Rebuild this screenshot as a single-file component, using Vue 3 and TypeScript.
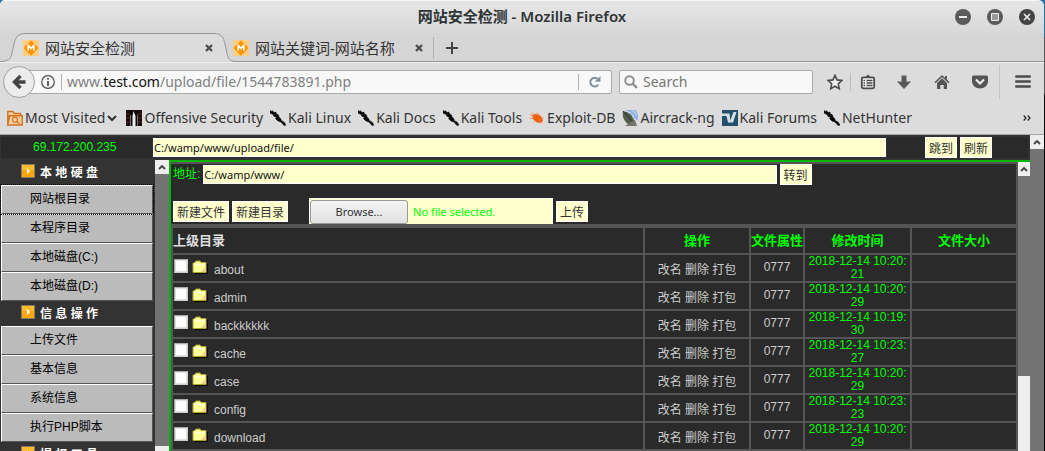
<script setup lang="ts">
import { ref } from 'vue'

interface Bookmark { name: string; icon: string }
interface Folder { name: string; date: string; sec: string }

const tabs = ['网站安全检测', '网站关键词-网站名称']
const bookmarks: Bookmark[] = [
  { name: 'Most Visited', icon: 'visited' },
  { name: 'Offensive Security', icon: 'offsec' },
  { name: 'Kali Linux', icon: 'kali' },
  { name: 'Kali Docs', icon: 'kali' },
  { name: 'Kali Tools', icon: 'kali' },
  { name: 'Exploit-DB', icon: 'bug' },
  { name: 'Aircrack-ng', icon: 'dish' },
  { name: 'Kali Forums', icon: 'forum' },
  { name: 'NetHunter', icon: 'kali' },
]
const groups = [
  { title: '本 地 硬 盘', items: ['网站根目录', '本程序目录', '本地磁盘(C:)', '本地磁盘(D:)'] },
  { title: '信 息 操 作', items: ['上传文件', '基本信息', '系统信息', '执行PHP脚本'] },
  { title: '提 权 工 具', items: [] as string[] },
]
const folders: Folder[] = [
  { name: 'about', date: '2018-12-14 10:20:', sec: '21' },
  { name: 'admin', date: '2018-12-14 10:20:', sec: '29' },
  { name: 'backkkkkk', date: '2018-12-14 10:19:', sec: '30' },
  { name: 'cache', date: '2018-12-14 10:23:', sec: '27' },
  { name: 'case', date: '2018-12-14 10:20:', sec: '29' },
  { name: 'config', date: '2018-12-14 10:23:', sec: '23' },
  { name: 'download', date: '2018-12-14 10:20:', sec: '29' },
]
const search = ref('')
const path = ref('C:/wamp/www/upload/file/')
const address = ref('C:/wamp/www/')
</script>

<template>
  <div class="desktop">
    <div class="window">
      <header class="titlebar">
        <h1>网站安全检测 - Mozilla Firefox</h1>
        <div class="winbtns">
          <button aria-label="Minimize"><svg viewBox="0 0 16 16"><circle cx="8" cy="8" r="8" fill="#5b5b5b" /><path d="M4 8h8" stroke="#ececec" stroke-width="2" /></svg></button>
          <button aria-label="Maximize"><svg viewBox="0 0 16 16"><circle cx="8" cy="8" r="8" fill="#5b5b5b" /><path d="M4.500 4.500h7v7h-7z" fill="#999" stroke="#ececec" /></svg></button>
          <button aria-label="Close"><svg viewBox="0 0 16 16"><circle cx="8" cy="8" r="8" fill="#444" /><path d="M5 5l6 6M11 5l-6 6" stroke="#ececec" stroke-width="1.700" /></svg></button>
        </div>
      </header>

      <div class="tabstrip">
        <div v-for="(t, i) in tabs" :key="t" class="tab" :class="{ active: i === 0 }">
          <svg v-if="i === 0" class="tabshape" viewBox="0 0 236 29">
            <path d="M0 28.500C8 28.500 11 26 12 20L14 11C15.500 4 18 .5 26 .5H214C221 .5 223.500 4 225 11L227 20C228 26 230 28.500 236 28.500V29H0Z" fill="#dcdcdc" />
            <path d="M0 28.500C8 28.500 11 26 12 20L14 11C15.500 4 18 .5 26 .5H214C221 .5 223.500 4 225 11L227 20C228 26 230 28.500 236 28.500" fill="none" stroke="#9098a0" />
          </svg>
          <svg class="fav" viewBox="0 0 16 16"><path d="M0 0h16v16H0z" fill="#ffcf86" /><path d="M8 .3L15.700 8 8 15.700.3 8Z" fill="#ff9800" /><path d="M5.200 10.500v-5L8 8.300l2.800-2.800v5" fill="none" stroke="#fff" stroke-width="1.600" /></svg>
          <span class="tabname">{{ t }}</span>
          <button class="tabclose" aria-label="Close tab"><svg viewBox="0 0 8 8"><path d="M1 1l6 6M7 1L1 7" stroke="#4c4c50" stroke-width="2.300" /></svg></button>
        </div>
        <button class="newtab" aria-label="New tab"><svg viewBox="0 0 12 12"><path d="M6 0v12M0 6h12" stroke="#444" stroke-width="2" /></svg></button>
      </div>

      <nav class="navbar">
        <button class="back" aria-label="Back"><svg viewBox="0 0 16 16"><path d="M9.500 2L3.500 8l6 6M4 8H14.500" fill="none" stroke="#444" stroke-width="3.400" /></svg></button>
        <div class="urlbar">
          <svg class="info" viewBox="0 0 14 14"><circle cx="7" cy="7" r="6.300" fill="none" stroke="#4c4c4c" stroke-width="1.200" /><path d="M7 6v5M7 3v1.800" stroke="#4c4c4c" stroke-width="1.800" /></svg>
          <i class="sep"></i>
          <span class="url">www.<b>test.com</b>/upload/file/1544783891.php</span>
          <i class="sep reload-sep"></i>
          <button class="reload" aria-label="Reload"><svg viewBox="0 0 12 12"><path d="M9.400 8.500A4.400 4.400 0 1 1 9 3.200" fill="none" stroke="#7f909f" stroke-width="2" /><path d="M11.500 0v5.700H5.800Z" fill="#7f909f" /></svg></button>
        </div>
        <label class="search">
          <svg viewBox="0 0 14 14"><circle cx="5.500" cy="5.500" r="4.300" fill="none" stroke="#8c8c8c" stroke-width="1.900" /><path d="M8.800 8.800L13 13" stroke="#8c8c8c" stroke-width="2.400" /></svg>
          <input v-model="search" placeholder="Search" aria-label="Search">
        </label>
        <div class="tools">
          <button class="star" aria-label="Bookmark"><svg viewBox="0 0 16 16"><path d="M8 1.300l2 4.600 5 .5-3.700 3.400 1 4.900L8 12.200l-4.300 2.500 1-4.900L1 6.400l5-.5Z" fill="#eee" stroke="#4c4c4c" stroke-width="1.600" /></svg></button>
          <i class="toolsep"></i>
          <button class="list" aria-label="Bookmarks list"><svg viewBox="0 0 16 16"><path d="M4.500 4L8 .5 11.500 4Z" fill="#4c4c4c" /><rect x="1.800" y="3.300" width="12.400" height="11" rx="1.500" fill="#f3f3f3" stroke="#4c4c4c" stroke-width="1.800" /><path d="M3.500 6.500h1.500M6.500 6.500h6M3.500 9h1.500M6.500 9h6M3.500 11.500h1.500M6.500 11.500h6" stroke="#4c4c4c" stroke-width="1.300" /></svg></button>
          <button aria-label="Downloads"><svg viewBox="0 0 16 16"><path d="M5.500 1.500h5v6H15L8 15 1 7.500h4.500Z" fill="#585858" /></svg></button>
          <button aria-label="Home"><svg viewBox="0 0 16 16"><path d="M1 8.800L8 2l7 6.800" fill="none" stroke="#555" stroke-width="1.600" /><path d="M3 9l5-4.800L13 9v6H9.700v-4H6.300v4H3ZM11 2h2v4l-2-2Z" fill="#555" /></svg></button>
          <button aria-label="Pocket"><svg viewBox="0 0 16 16"><path d="M1.500 1.500h13q1.500 0 1.500 1.500v4.500a8 7 0 0 1-16 0V3q0-1.500 1.500-1.500Z" fill="#555" /><path d="M4 5.500l4 4 4-4" fill="none" stroke="#eee" stroke-width="2.200" /></svg></button>
          <button class="menu" aria-label="Menu"><svg viewBox="0 0 16 16"><path d="M1.200 2.500h13.600M1.200 7.500h13.600M1.200 12.500h13.600" stroke="#4c4c4c" stroke-width="2.400" stroke-linecap="round" /></svg></button>
        </div>
      </nav>

      <nav class="bookmarks">
        <a v-for="b in bookmarks" :key="b.name" href="#">
          <svg v-if="b.icon === 'visited'" viewBox="0 0 16 16"><path d="M.8 14V1.500h5l1.500 2h6.200V6M.8 14L2.500 5.800h12.700V15H.8Z" fill="#f8cf9e" stroke="#cc7020" stroke-width="1.400" /><circle cx="8" cy="9.800" r="2.500" fill="none" stroke="#d67a2b" stroke-width="1.300" /><path d="M10 11.500l2.500 2" stroke="#cc7020" stroke-width="1.400" /></svg>
          <svg v-else-if="b.icon === 'offsec'" viewBox="0 0 16 16"><path d="M0 0h16v16H0z" fill="#170b0c" /><path d="M0 4h16M0 8h16M0 12h16" stroke="#542b2b" /><path d="M4 1h7v15H4z" fill="#090909" /><path d="M7.500 1L6.500 6v10h3V6Z" fill="#eee" /><path d="M4.500 5v11M11.500 5v11" stroke="#7a6868" /></svg>
          <svg v-else-if="b.icon === 'kali'" viewBox="0 0 16 16"><path d="M0 .5L2.500 2 2 .7 4.500 2.500 6 2v1.500L8.500 5l.5 2 2 2v1.500l3 1.500 2 3-2 .5-3-3.500-3-1-2.500-2.500L6.500 7.500 3.500 6l.5-1L0 3Z" fill="#080808" stroke="#080808" stroke-width=".6" /></svg>
          <svg v-else-if="b.icon === 'bug'" viewBox="0 0 16 16"><path d="M3 5l3-1 4 .5 3 3 1 3-2 2.500-4-.5-4-3Z" fill="#f1600f" /><path d="M1 8l4 1M3 2.500l3 3M8 2.500l1 3M14.500 8l-3 1M13.500 13.500l-3-3M5 12.500l2-2M1 4.500l4 2" stroke="#f08a55" stroke-width=".9" /></svg>
          <svg v-else-if="b.icon === 'dish'" viewBox="0 0 16 16"><path d="M6 1q8 0 9 9M8 3q5 1 5 6M4 0h8q4 3 4 9" fill="none" stroke="#91b5ea" stroke-width="1.500" /><path d="M1 1q10 1 12 13-7 2-10-3Q0 7 1 1Z" fill="#545d51" /><path d="M1 1l12 13" stroke="#283027" /><path d="M9 12l4-2 2 6H3l3-2Z" fill="#77746a" /></svg>
          <svg v-else viewBox="0 0 16 16"><path d="M0 0h16v16H0z" fill="#24506e" /><path d="M0 3.500h7.500l.8 7L11.500 2h3L11 12.500H6L4.500 6H0Z" fill="#d5dfe5" /></svg>
          <span>{{ b.name }}</span>
          <svg v-if="b.icon === 'visited'" class="chev" viewBox="0 0 10 8"><path d="M1 2l4 4 4-4" fill="none" stroke="#333" stroke-width="2" /></svg>
        </a>
        <button class="more" aria-label="More bookmarks"><svg viewBox="0 0 8 6"><path d="M.7.5L3 3 .7 5.500M4.700.5L7 3 4.700 5.500" fill="none" stroke="#222" stroke-width="1.200" /></svg></button>
      </nav>

      <main class="page">
        <div class="frames">
          <form class="topbar" @submit.prevent>
            <div class="ip">69.172.200.235</div>
            <div class="pathcell"><input v-model="path" aria-label="Path"></div>
            <div class="gocell">
              <button class="btn">跳到</button>
              <button class="btn">刷新</button>
            </div>
          </form>
          <div class="split">
            <aside class="side">
              <section v-for="g in groups" :key="g.title">
                <h2>
                  <svg viewBox="0 0 14 14"><path d="M.5.5h13v13H.5z" fill="#ffa60a" stroke="#857a61" /><path d="M1 1h12v5H1z" fill="#ffb92c" /><path d="M6 4l3 3-3 3Z" fill="#fff" /></svg>
                  <span>{{ g.title }}</span>
                </h2>
                <a v-for="(it, i) in g.items" :key="it" href="#" :class="{ focused: i === 0 && g === groups[0] }">{{ it }}</a>
              </section>
            </aside>
            <div class="scroll sidescroll">
              <div class="up"><svg viewBox="0 0 8 6"><path d="M1 5l3-3 3 3" fill="none" stroke="#444" stroke-width="1.800" /></svg></div>
              <div class="thumb"></div>
            </div>
            <div class="content">
              <div class="panel">
                <form class="row" @submit.prevent>
                  <label for="addr">地址:</label>
                  <input id="addr" v-model="address">
                  <button class="btn">转到</button>
                </form>
                <form class="row actions" @submit.prevent>
                  <button class="btn">新建文件</button>
                  <button class="btn">新建目录</button>
                  <label class="file">
                    <input type="file">
                    <span class="browse">Browse...</span>
                    <span>No file selected.</span>
                  </label>
                  <button class="btn">上传</button>
                </form>
                <table>
                  <thead>
                    <tr>
                      <th class="name">上级目录</th>
                      <th class="ops">操作</th>
                      <th class="attr">文件属性</th>
                      <th class="time">修改时间</th>
                      <th class="size">文件大小</th>
                    </tr>
                  </thead>
                  <tbody>
                    <tr v-for="f in folders" :key="f.name">
                      <td>
                        <div class="entry">
                          <input :id="'f-' + f.name" type="checkbox">
                          <svg viewBox="0 0 16 14"><path d="M2 13.500h13.500V4" fill="none" stroke="#080800" stroke-width="1.500" /><path d="M1 12.500v-9l1-1h1l1-1.500h4l1 1.500h5v10Z" fill="#ffff9c" stroke="#b0a62c" /><path d="M9 12l5-6v6Z" fill="#f3cf8c" /><path d="M2 4.500h11" stroke="#fffde0" /></svg>
                          <label :for="'f-' + f.name">{{ f.name }}</label>
                        </div>
                      </td>
                      <td class="ops"><a href="#">改名</a> <a href="#">删除</a> <a href="#">打包</a></td>
                      <td class="attr"><a href="#">0777</a></td>
                      <td class="time">{{ f.date }}<wbr>{{ f.sec }}</td>
                      <td></td>
                    </tr>
                  </tbody>
                </table>
              </div>
              <div class="scroll contentscroll">
                <div class="up"><svg viewBox="0 0 8 6"><path d="M1 5l3-3 3 3" fill="none" stroke="#444" stroke-width="1.800" /></svg></div>
                <div class="thumb"></div>
              </div>
            </div>
          </div>
        </div>
        <div class="scroll outer">
          <div class="up"><svg viewBox="0 0 8 6"><path d="M1 5l3-3 3 3" fill="none" stroke="#444" stroke-width="1.800" /></svg></div>
        </div>
      </main>
    </div>
  </div>
</template>

<style>
html, body { margin: 0; overflow: hidden; }
</style>
<style scoped>
* { box-sizing: border-box; }
svg { display: block; flex: none; }
button { border: 0; padding: 0; margin: 0; background: none; font: inherit; color: inherit; display: flex; align-items: center; justify-content: center; flex: none; }
a { color: inherit; text-decoration: none; }
.desktop { height: 100vh; padding-right: 1px; background: linear-gradient(#1b75a8 0 37px, #555 37px 94px, #050505 94px); overflow: hidden; }
.window { height: 100%; display: flex; flex-direction: column; background: #dcdcdc; border-radius: 5px 6px 0 0; overflow: hidden; font: 14px/20px "Noto Sans", "Noto Sans CJK SC", sans-serif; color: #333; }

.titlebar { height: 33px; flex: none; display: grid; grid-template-columns: 1fr auto 1fr; align-items: center; background: linear-gradient(#e6e6e6, #d8d8d8); border-top: 1px solid #f6f6f6; }
h1 { grid-column: 2; margin: 0; padding-bottom: 2px; font-size: 15px; line-height: 20px; font-weight: 600; color: #2e3436; }
.winbtns { display: flex; gap: 16px; justify-content: flex-end; padding-right: 9px; }
.winbtns svg { width: 16px; height: 16px; }

.tabstrip { height: 29px; flex: none; display: flex; background: #d5d5d5; box-shadow: inset 0 -1px #96999c; }
.tab { position: relative; width: 210px; height: 29px; display: flex; align-items: center; font-size: 15px; padding: 0 10px; }
.tab.active { width: 223px; padding-left: 23px; }
.tabshape { position: absolute; left: 0; top: 0; width: 236px; height: 29px; }
.fav { position: relative; width: 16px; height: 16px; margin-right: 6px; }
.tabname { position: relative; flex: 1; white-space: nowrap; color: #333; }
.tabclose { position: relative; }
.tabclose svg { width: 8px; height: 8px; }
.newtab { width: 37px; height: 22px; align-self: center; border-left: 1px solid #b0b0b0; }
.newtab svg { width: 12px; height: 12px; }

.navbar { height: 40px; flex: none; display: flex; align-items: center; padding: 0 13px 2px 3px; border-top: 1px solid #eee; }
.back { width: 32px; height: 32px; border: 1px solid #a2a2a2; border-radius: 50%; background: #ececec; position: relative; z-index: 1; }
.back svg { width: 16px; height: 16px; }
.urlbar { flex: 1; height: 24px; margin-left: -8px; display: flex; align-items: center; background: #f8f8f8; border: 1px solid #aaa; border-radius: 2px; padding-left: 13px; color: #808080; }
.info { width: 14px; height: 14px; }
.sep { width: 1px; height: 16px; background: #b0b0b0; margin: 0 5px 0 6px; }
.url { flex: 1; white-space: nowrap; }
.url b { font-weight: 400; color: #111; }
.reload-sep { margin: 0; }
.reload { width: 32px; }
.reload svg { width: 12px; height: 12px; }
.search { width: 194px; height: 24px; margin-left: 7px; display: flex; align-items: center; gap: 5px; padding: 0 4px; background: #f8f8f8; border: 1px solid #aaa; border-radius: 2px; }
.search svg { width: 14px; height: 14px; }
.search input { min-width: 0; flex: 1; border: 0; padding: 0; background: none; outline: 0; font: inherit; color: #333; }
.search input::placeholder { color: #777; opacity: 1; }
.tools { display: flex; align-items: center; margin-left: 9px; }
.tools button { width: 38px; height: 34px; }
.tools .star { width: 26px; }
.tools .list { width: 34px; }
.toolsep { width: 1px; height: 18px; margin-left: 2px; background: #bbb; }
.tools svg { width: 16px; height: 16px; }
.tools .menu { width: 32px; justify-content: flex-end; border-left: 1px solid #c4c4c4; }

.bookmarks { height: 33px; flex: none; display: flex; align-items: center; gap: 7px; padding: 0 13px 0 7px; border-bottom: 1px solid #a5a5a5; }
.bookmarks a { display: flex; align-items: center; gap: 2px; white-space: nowrap; }
.bookmarks svg { width: 16px; height: 16px; }
.bookmarks .chev { width: 10px; height: 8px; margin-right: 2px; }
.bookmarks .more { margin-left: auto; }
.bookmarks .more svg { width: 8px; height: 6px; }

.page { flex: 1; min-height: 0; display: flex; background: #333; font: 12px/13px "Liberation Sans", "Noto Sans CJK SC", sans-serif; }
.frames { flex: 1; min-width: 0; display: flex; flex-direction: column; }
.scroll { width: 14px; flex: none; background: #737373; display: flex; flex-direction: column; justify-content: space-between; }
.up { height: 14px; background: #eee; display: flex; align-items: center; justify-content: center; }
.up svg { width: 8px; height: 6px; }
.thumb { background: #eee; }
.sidescroll .thumb { height: 5px; }
.contentscroll { width: 12px; }
.contentscroll .thumb { height: 26%; }

.topbar { height: 25px; flex: none; display: flex; gap: 1px; padding: 2px 2px 2px 1px; }
.topbar > div { background: #2a2a2a; display: flex; align-items: center; }
.ip { width: 151px; padding-left: 32px; color: #0f0; }
.page input:not([type]) { height: 19px; min-width: 0; border: 1px solid #fff; background: #ffc; padding: 0; color: #111; outline: 0; font: 11px/15px "Noto Sans", "Noto Sans CJK SC", sans-serif; }
.pathcell { flex: 1; }
.pathcell input { width: 100%; }
.gocell { width: 141px; gap: 3px; padding-left: 38px; }
.btn { height: 21px; padding: 0 3px; border: 1px solid #fff; background: #ffc; color: #333; font: 12px/17px "Noto Sans CJK SC", sans-serif; }

.split { flex: 1; min-height: 0; display: flex; }
.side { width: 155px; flex: none; overflow: hidden; padding: 0 2px 0 1px; }
h2 { margin: 0; height: 25px; display: flex; align-items: center; gap: 5px; padding-left: 20px; color: #fff; font: 700 12px/14px "Liberation Sans", "Noto Sans CJK SC", sans-serif; }
h2 svg { width: 14px; height: 14px; margin-bottom: 4px; }
.side a { display: block; height: 29px; background: #bbb; border: 1px solid; border-color: #fff #555 #555 #fff; color: #000; padding-left: 28px; line-height: 27px; }
.side a.focused { outline: 1px dotted #000; }
.content { flex: 1; min-width: 0; display: flex; border: solid #00b400; border-width: 2px 0 0 2px; overflow: hidden; }
.panel { flex: 1; min-width: 0; background: #2a2a2a; border-top: 2px solid #555; border-right: 2px solid #555; }
.row { display: flex; align-items: center; height: 21px; padding-left: 2px; gap: 3px; }
.row label { color: #0f0; white-space: nowrap; }
#addr { width: 68%; }
.actions { height: 26px; margin-top: 13px; }
.file { display: flex; align-items: center; width: 244px; height: 26px; margin-left: 18px; gap: 5px; border: 1px solid #fff; border-bottom: 0; background: #ffc; font: 11px/15px "Noto Sans", sans-serif; }
.file input { position: absolute; opacity: 0; width: 1px; height: 1px; }
.browse { width: 98px; height: 24px; display: flex; align-items: center; justify-content: center; border: 1px solid #999; border-radius: 3px; background: linear-gradient(#f4f4f4, #e2e2e2); color: #333; }
table { width: calc(100% + 2px); table-layout: fixed; border-spacing: 2px; background: #555; border-top: 2px solid #555; }
th, td { background: #2a2a2a; padding: 0; color: #ccc; font-weight: 400; }
th { height: 25px; color: #0f0; text-align: center; font-weight: 700; font-size: 13px; line-height: 15px; white-space: nowrap; }
th.name { text-align: left; color: #ddd; }
td { height: 26px; text-align: center; }
th.ops { width: 104px; }
th.attr { width: 52px; }
th.time { width: 105px; }
th.size { width: 104px; }
td.time { color: #0f0; }
td.ops { padding-top: 4px; }
.attr a { display: block; padding-bottom: 2px; }
.entry { display: flex; align-items: center; height: 26px; padding-left: 1px; }
.entry input { appearance: none; width: 14px; height: 14px; margin: 0 4px 4px 0; background: #fff; border: 1px solid; border-color: #aaa #ccc #ccc #aaa; box-shadow: inset 0 0 0 1px #e0e0e0; }
.entry svg { width: 16px; height: 14px; margin: 0 6px 2px 0; }
.entry label { padding-top: 5px; }
</style>
